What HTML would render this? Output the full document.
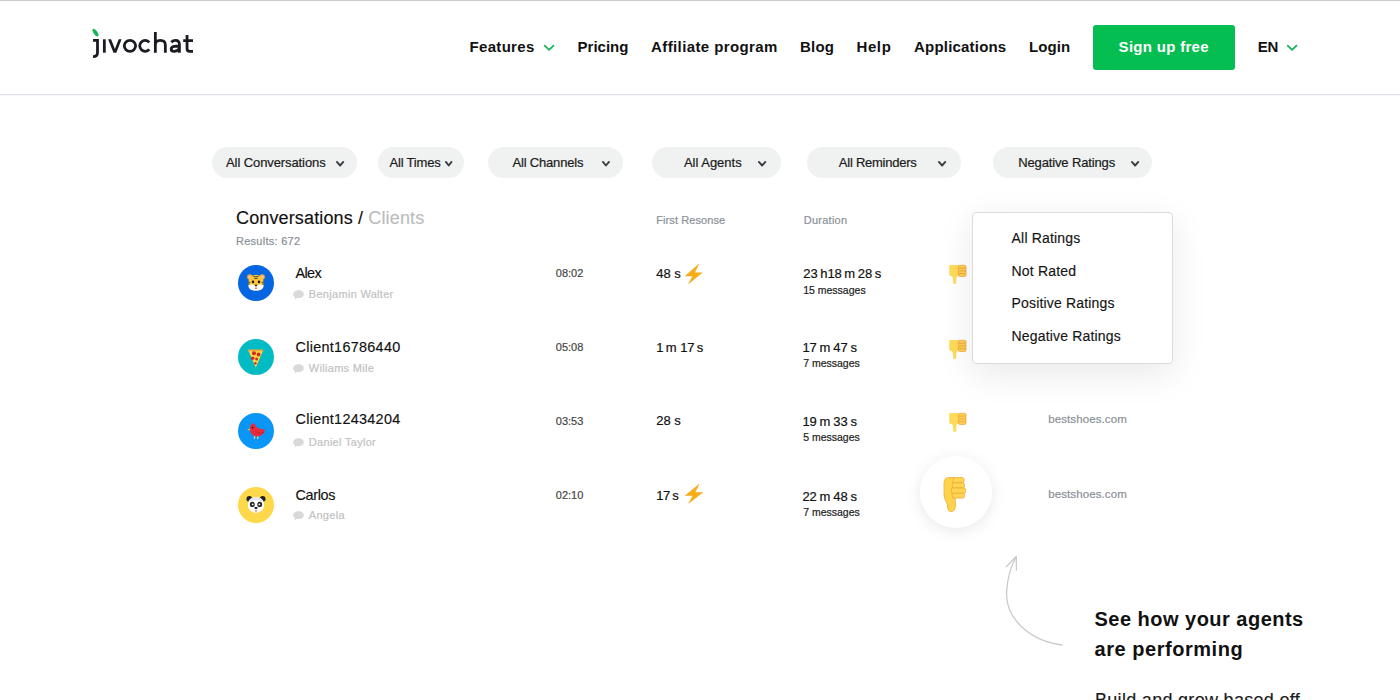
<!DOCTYPE html>
<html><head><meta charset="utf-8"><title>JivoChat</title>
<style>
html,body{margin:0;padding:0;background:#fff;}
body{width:1400px;height:700px;position:relative;overflow:hidden;font-family:"Liberation Sans",sans-serif;}
.t{position:absolute;white-space:pre;line-height:1;}
.a{position:absolute;overflow:visible;}
.pill{position:absolute;background:#f0f2f2;border-radius:16px;}
</style></head><body>
<div class="a" style="left:0;top:0;width:1400px;height:1px;background:#cbcbcb"></div>
<div class="a" style="left:0;top:94px;width:1400px;height:1px;background:#e0e0ea"></div>
<div class="a" style="left:0;top:95px;width:1400px;height:1px;background:#f6f6fb"></div>
<svg class="a" style="left:0;top:0" width="220" height="80"><g fill="none" stroke="#1b1b24" stroke-width="2.8"><path d="M93 40.3H97.5V52.5Q97.5 56.6 93 56.6"/><path d="M104.35 39.3V52.7"/><ellipse cx="129.95" cy="45.85" rx="5.65" ry="5.45"/><path d="M149.3 42.3A5.45 5.45 0 1 0 149.3 49.4"/><path d="M155.35 32.1V52.7M155.35 52.7V45Q155.35 40.4 160.35 40.4Q165.35 40.4 165.35 45V52.7"/><path d="M171.3 42.3Q173 40.4 175.6 40.4Q179.4 40.4 179.4 44.6V52.7"/><path d="M179.4 46.4Q176.5 46.1 174.3 46.4Q171.2 46.9 171.2 49.2Q171.2 51.4 174.2 51.4Q177.6 51.4 179.4 48.6"/><path d="M187.05 35V48.8Q187.05 51.3 189.6 51.3H193M183.2 40.55H193"/></g><path d="M108.1 39.3H111.1L114.9 48.9L118.7 39.3H121.6L116.3 52.7H113.5Z" fill="#1b1b24"/><ellipse cx="95.5" cy="32.7" rx="4.4" ry="1.9" transform="rotate(55 95.5 32.7)" fill="#1ab550"/></svg>
<div class="t" style="left:469.60px;top:39.20px;font-size:15px;color:#111;font-weight:bold;letter-spacing:0.3px;">Features</div>
<div class="t" style="left:577.60px;top:39.20px;font-size:15px;color:#111;font-weight:bold;letter-spacing:0px;">Pricing</div>
<div class="t" style="left:651.00px;top:39.20px;font-size:15px;color:#111;font-weight:bold;letter-spacing:0.4px;">Affiliate program</div>
<div class="t" style="left:800.00px;top:39.20px;font-size:15px;color:#111;font-weight:bold;letter-spacing:0.2px;">Blog</div>
<div class="t" style="left:856.50px;top:39.20px;font-size:15px;color:#111;font-weight:bold;letter-spacing:0.6px;">Help</div>
<div class="t" style="left:914.00px;top:39.20px;font-size:15px;color:#111;font-weight:bold;letter-spacing:0.2px;">Applications</div>
<div class="t" style="left:1029.00px;top:39.20px;font-size:15px;color:#111;font-weight:bold;letter-spacing:0.1px;">Login</div>
<svg class="a" style="left:543.10px;top:44.10px" width="12.20" height="7.60"><polyline points="1.7,1.7 6.1000000000000005,5.9 10.5,1.7" fill="none" stroke="#17b257" stroke-width="1.7" stroke-linecap="round" stroke-linejoin="round"/></svg>
<div class="a" style="left:1093px;top:25px;width:142px;height:45px;background:#05be52;border-radius:3px"></div>
<div class="t" style="left:1118.60px;top:39.20px;font-size:15px;color:#fff;font-weight:bold;letter-spacing:0.3px;">Sign up free</div>
<div class="t" style="left:1257.80px;top:39.20px;font-size:15px;color:#111;font-weight:bold;letter-spacing:-0.4px;">EN</div>
<svg class="a" style="left:1286.10px;top:44.10px" width="12.20" height="7.60"><polyline points="1.7,1.7 6.1000000000000005,5.9 10.5,1.7" fill="none" stroke="#17b257" stroke-width="1.7" stroke-linecap="round" stroke-linejoin="round"/></svg>
<div class="pill" style="left:212px;top:147px;width:145.0px;height:31px"></div>
<div class="t" style="left:226.00px;top:155.90px;font-size:13px;color:#1a1a1a;font-weight:normal;letter-spacing:-0.092px;-webkit-text-stroke:0.2px currentColor;">All Conversations</div>
<svg class="a" style="left:334.90px;top:159.50px" width="10.20" height="7.40"><polyline points="1.9,1.9 5.1,5.5 8.3,1.9" fill="none" stroke="#3a3d42" stroke-width="1.9" stroke-linecap="round" stroke-linejoin="round"/></svg>
<div class="pill" style="left:377.8px;top:147px;width:86.5px;height:31px"></div>
<div class="t" style="left:389.50px;top:155.90px;font-size:13px;color:#1a1a1a;font-weight:normal;letter-spacing:-0.182px;-webkit-text-stroke:0.2px currentColor;">All Times</div>
<svg class="a" style="left:443.70px;top:159.50px" width="9.40" height="7.40"><polyline points="1.9,1.9 4.699999999999999,5.5 7.5,1.9" fill="none" stroke="#3a3d42" stroke-width="1.9" stroke-linecap="round" stroke-linejoin="round"/></svg>
<div class="pill" style="left:488.3px;top:147px;width:135.2px;height:31px"></div>
<div class="t" style="left:512.60px;top:155.90px;font-size:13px;color:#1a1a1a;font-weight:normal;letter-spacing:-0.2px;-webkit-text-stroke:0.2px currentColor;">All Channels</div>
<svg class="a" style="left:600.70px;top:159.50px" width="9.90" height="7.40"><polyline points="1.9,1.9 4.949999999999999,5.5 8.0,1.9" fill="none" stroke="#3a3d42" stroke-width="1.9" stroke-linecap="round" stroke-linejoin="round"/></svg>
<div class="pill" style="left:652px;top:147px;width:128.5px;height:31px"></div>
<div class="t" style="left:683.90px;top:155.90px;font-size:13px;color:#1a1a1a;font-weight:normal;letter-spacing:-0.003px;-webkit-text-stroke:0.2px currentColor;">All Agents</div>
<svg class="a" style="left:756.60px;top:159.50px" width="10.20" height="7.40"><polyline points="1.9,1.9 5.1,5.5 8.3,1.9" fill="none" stroke="#3a3d42" stroke-width="1.9" stroke-linecap="round" stroke-linejoin="round"/></svg>
<div class="pill" style="left:807.2px;top:147px;width:153.7px;height:31px"></div>
<div class="t" style="left:838.80px;top:155.90px;font-size:13px;color:#1a1a1a;font-weight:normal;letter-spacing:-0.24px;-webkit-text-stroke:0.2px currentColor;">All Reminders</div>
<svg class="a" style="left:936.90px;top:159.50px" width="10.20" height="7.40"><polyline points="1.9,1.9 5.1,5.5 8.3,1.9" fill="none" stroke="#3a3d42" stroke-width="1.9" stroke-linecap="round" stroke-linejoin="round"/></svg>
<div class="pill" style="left:993px;top:147px;width:158.5px;height:31px"></div>
<div class="t" style="left:1018.20px;top:155.90px;font-size:13px;color:#1a1a1a;font-weight:normal;letter-spacing:-0.131px;-webkit-text-stroke:0.2px currentColor;">Negative Ratings</div>
<svg class="a" style="left:1129.90px;top:159.50px" width="10.20" height="7.40"><polyline points="1.9,1.9 5.1,5.5 8.3,1.9" fill="none" stroke="#3a3d42" stroke-width="1.9" stroke-linecap="round" stroke-linejoin="round"/></svg>
<div class="t" style="left:236.00px;top:208.76px;font-size:18px;color:#111;font-weight:normal;letter-spacing:0.14px;-webkit-text-stroke:0.15px currentColor;">Conversations / <span style="color:#bcbcbc">Clients</span></div>
<div class="t" style="left:236.00px;top:235.69px;font-size:11px;color:#8a9098;font-weight:normal;letter-spacing:0.27px;-webkit-text-stroke:0.2px currentColor;">Results: 672</div>
<div class="t" style="left:656.30px;top:214.59px;font-size:11px;color:#8a9098;font-weight:normal;letter-spacing:0.08px;-webkit-text-stroke:0.2px currentColor;">First Resonse</div>
<div class="t" style="left:803.70px;top:214.59px;font-size:11px;color:#8a9098;font-weight:normal;letter-spacing:0.26px;-webkit-text-stroke:0.2px currentColor;">Duration</div>
<div class="a" style="left:238px;top:265.2px;width:36px;height:36px;border-radius:50%;background:#0666e2"></div>
<svg class="a" style="left:246px;top:273.2px" width="20" height="20" viewBox="0 0 20 20"><circle cx="3.8" cy="4" r="2.7" fill="#f4a640"/><circle cx="16.2" cy="4" r="2.7" fill="#f4a640"/><circle cx="3.9" cy="4.1" r="1.5" fill="#fbd3a0"/><circle cx="16.1" cy="4.1" r="1.5" fill="#fbd3a0"/><path d="M2.6 8.5C2.6 4 5.6 2 10 2C14.4 2 17.4 4 17.4 8.5L17.4 12.8C17.4 16 14.4 17.6 10 17.6C5.6 17.6 2.6 16 2.6 12.8Z" fill="#ffc53a"/><path d="M2.6 12C4.5 11.2 7.5 11.6 10 13C12.5 11.6 15.5 11.2 17.4 12L17.4 13.2C17.4 16 14.4 17.6 10 17.6C5.6 17.6 2.6 16 2.6 13.2Z" fill="#fff"/><path d="M7.2 2.4Q10 4.4 12.8 2.4L12.6 3.2Q10 5.2 7.4 3.2Z M8 4.6Q10 6 12 4.6L11.8 5.3Q10 6.7 8.2 5.3Z" fill="#222"/><path d="M2.6 8.6L5 9.4L2.6 9.8Z M2.6 10.6L4.6 11.2L2.6 11.6Z M17.4 8.6L15 9.4L17.4 9.8Z M17.4 10.6L15.4 11.2L17.4 11.6Z" fill="#222"/><ellipse cx="7" cy="8.9" rx="1.2" ry="1.4" fill="#111"/><ellipse cx="13" cy="8.9" rx="1.2" ry="1.4" fill="#111"/><path d="M8.4 11.8L11.6 11.8L10 13.8Z" fill="#111"/><ellipse cx="10" cy="15.2" rx="1" ry="0.9" fill="#f0635a"/></svg>
<div class="t" style="left:295.50px;top:265.61px;font-size:14.4px;color:#111;font-weight:normal;letter-spacing:-0.6px;-webkit-text-stroke:0.15px currentColor;">Alex</div>
<svg class="a" style="left:293.3px;top:290.1px" width="11" height="10" viewBox="0 0 11 10"><path d="M5.5 0.3C8.6 0.3 10.8 2 10.8 4.2C10.8 6.4 8.6 8.1 5.5 8.1C4.8 8.1 4.2 8 3.6 7.9L1.6 9.6L1.9 7.2C0.9 6.5 0.2 5.4 0.2 4.2C0.2 2 2.4 0.3 5.5 0.3Z" fill="#d9d9d9"/></svg>
<div class="t" style="left:308.80px;top:289.29px;font-size:11px;color:#c2c2c2;font-weight:normal;letter-spacing:0.3px;-webkit-text-stroke:0.2px currentColor;">Benjamin Walter</div>
<div class="t" style="left:555.80px;top:268.29px;font-size:11px;color:#454545;font-weight:normal;letter-spacing:0px;-webkit-text-stroke:0.2px currentColor;">08:02</div>
<div class="t" style="left:656.20px;top:267.00px;font-size:13px;color:#111;font-weight:normal;letter-spacing:0px;-webkit-text-stroke:0.2px currentColor;">48 s</div>
<svg class="a" style="left:684.5px;top:264px" width="17" height="20" viewBox="0 0 16 19.5" preserveAspectRatio="none"><path d="M12.8 0.3L0.3 11.6L7.4 11.6L3.4 19.2L16 8.6L9 8.6Z" fill="#f7ae14" stroke="#f0a010" stroke-width="0.5" stroke-linejoin="round"/></svg>
<div class="t" style="left:803.20px;top:266.70px;font-size:13px;color:#111;font-weight:normal;letter-spacing:0px;-webkit-text-stroke:0.2px currentColor;word-spacing:-1.1px;">23 h18 m 28 s</div>
<div class="t" style="left:803.20px;top:285.01px;font-size:10.5px;color:#222;font-weight:normal;letter-spacing:0px;-webkit-text-stroke:0.2px currentColor;">15 messages</div>
<svg class="a" style="left:948.8px;top:264.8px" width="17.3" height="19" viewBox="0 0 17.3 19"><path d="M0.2 1.2Q0.2 0 1.4 0L9.7 0L9.7 10.6L8.4 10.9Q7.4 11.6 7.3 13.5L7.2 18Q7.1 19 5.7 19Q4.4 19 4.3 18L4 13.5Q3.8 11.6 2.2 10.9L1.2 10.7Q0.2 10.4 0.2 9.3Z" fill="#fedb5a"/><rect x="9.4" y="0.3" width="7.6" height="11.2" rx="1.4" fill="#fdd152" stroke="#eda53e" stroke-width="0.7"/><path d="M9.6 3.1H16.8M9.6 5.9H17.2M9.6 8.7H16.8" stroke="#eb9f3b" stroke-width="0.8"/></svg>
<div class="a" style="left:238px;top:339.3px;width:36px;height:36px;border-radius:50%;background:#03bbc4"></div>
<svg class="a" style="left:247px;top:348.3px" width="18" height="20" viewBox="0 0 18 20"><path d="M1.2 2.2L16.2 2.2L8.8 19.6Z" fill="#ffd93b"/><path d="M1 1.4L16.4 1.4L15.8 3.2L1.6 3.2Z" fill="#f4a93a"/><circle cx="7" cy="5.2" r="2" fill="#d8262c"/><circle cx="11.6" cy="6.5" r="1.9" fill="#d8262c"/><circle cx="5.6" cy="10.2" r="1.8" fill="#d8262c"/><circle cx="9.6" cy="11" r="1.5" fill="#d8262c"/><circle cx="8.4" cy="15.2" r="1.2" fill="#d8262c"/></svg>
<div class="t" style="left:295.50px;top:339.51px;font-size:14.4px;color:#111;font-weight:normal;letter-spacing:0.3px;-webkit-text-stroke:0.15px currentColor;">Client16786440</div>
<svg class="a" style="left:293.3px;top:364.2px" width="11" height="10" viewBox="0 0 11 10"><path d="M5.5 0.3C8.6 0.3 10.8 2 10.8 4.2C10.8 6.4 8.6 8.1 5.5 8.1C4.8 8.1 4.2 8 3.6 7.9L1.6 9.6L1.9 7.2C0.9 6.5 0.2 5.4 0.2 4.2C0.2 2 2.4 0.3 5.5 0.3Z" fill="#d9d9d9"/></svg>
<div class="t" style="left:308.80px;top:363.39px;font-size:11px;color:#c2c2c2;font-weight:normal;letter-spacing:0.3px;-webkit-text-stroke:0.2px currentColor;">Wiliams Mile</div>
<div class="t" style="left:555.80px;top:341.89px;font-size:11px;color:#454545;font-weight:normal;letter-spacing:0px;-webkit-text-stroke:0.2px currentColor;">05:08</div>
<div class="t" style="left:656.20px;top:340.80px;font-size:13px;color:#111;font-weight:normal;letter-spacing:0px;-webkit-text-stroke:0.2px currentColor;word-spacing:-1.2px;">1 m</div>
<div class="t" style="left:680.20px;top:340.80px;font-size:13px;color:#111;font-weight:normal;letter-spacing:-0.2px;-webkit-text-stroke:0.2px currentColor;word-spacing:-0.8px;">17 s</div>
<div class="t" style="left:802.40px;top:340.80px;font-size:13px;color:#111;font-weight:normal;letter-spacing:0px;-webkit-text-stroke:0.2px currentColor;word-spacing:-0.85px;">17 m 47 s</div>
<div class="t" style="left:803.20px;top:357.61px;font-size:10.5px;color:#222;font-weight:normal;letter-spacing:0px;-webkit-text-stroke:0.2px currentColor;">7 messages</div>
<svg class="a" style="left:948.7px;top:340px" width="17.3" height="19" viewBox="0 0 17.3 19"><path d="M0.2 1.2Q0.2 0 1.4 0L9.7 0L9.7 10.6L8.4 10.9Q7.4 11.6 7.3 13.5L7.2 18Q7.1 19 5.7 19Q4.4 19 4.3 18L4 13.5Q3.8 11.6 2.2 10.9L1.2 10.7Q0.2 10.4 0.2 9.3Z" fill="#fedb5a"/><rect x="9.4" y="0.3" width="7.6" height="11.2" rx="1.4" fill="#fdd152" stroke="#eda53e" stroke-width="0.7"/><path d="M9.6 3.1H16.8M9.6 5.9H17.2M9.6 8.7H16.8" stroke="#eb9f3b" stroke-width="0.8"/></svg>
<div class="a" style="left:238px;top:412.6px;width:36px;height:36px;border-radius:50%;background:#0996f6"></div>
<svg class="a" style="left:246px;top:421.6px" width="20" height="18" viewBox="0 0 20 18"><path d="M1 7.5L4.2 6.6L4.4 8.6Z" fill="#f5c33b"/><path d="M4 7.2C4 4 5.5 1 7.8 1.4C9.4 1.7 9 3.5 10.4 5C12.5 7 16.5 7.2 18.8 7.6C18.4 11.5 15.5 14.5 11 14.6C7.5 14.7 4.2 11.5 4 7.2Z" fill="#ee2a3a"/><path d="M9.5 9C12 11.5 15 11.8 18 10" stroke="#b81d2b" stroke-width="0.9" fill="none"/><circle cx="6.6" cy="5.6" r="0.9" fill="#3a0a10"/><path d="M8.8 14.2L8.2 17M12 14.4L11.6 17" stroke="#f6c98a" stroke-width="1.2"/></svg>
<div class="t" style="left:295.50px;top:412.01px;font-size:14.4px;color:#111;font-weight:normal;letter-spacing:0.3px;-webkit-text-stroke:0.15px currentColor;">Client12434204</div>
<svg class="a" style="left:293.3px;top:438.1px" width="11" height="10" viewBox="0 0 11 10"><path d="M5.5 0.3C8.6 0.3 10.8 2 10.8 4.2C10.8 6.4 8.6 8.1 5.5 8.1C4.8 8.1 4.2 8 3.6 7.9L1.6 9.6L1.9 7.2C0.9 6.5 0.2 5.4 0.2 4.2C0.2 2 2.4 0.3 5.5 0.3Z" fill="#d9d9d9"/></svg>
<div class="t" style="left:308.80px;top:437.29px;font-size:11px;color:#c2c2c2;font-weight:normal;letter-spacing:0.3px;-webkit-text-stroke:0.2px currentColor;">Daniel Taylor</div>
<div class="t" style="left:555.80px;top:415.69px;font-size:11px;color:#454545;font-weight:normal;letter-spacing:0px;-webkit-text-stroke:0.2px currentColor;">03:53</div>
<div class="t" style="left:656.20px;top:414.00px;font-size:13px;color:#111;font-weight:normal;letter-spacing:0px;-webkit-text-stroke:0.2px currentColor;">28 s</div>
<div class="t" style="left:802.40px;top:415.00px;font-size:13px;color:#111;font-weight:normal;letter-spacing:0px;-webkit-text-stroke:0.2px currentColor;word-spacing:-0.85px;">19 m 33 s</div>
<div class="t" style="left:803.20px;top:432.41px;font-size:10.5px;color:#222;font-weight:normal;letter-spacing:0px;-webkit-text-stroke:0.2px currentColor;">5 messages</div>
<svg class="a" style="left:948.7px;top:413px" width="17.3" height="19" viewBox="0 0 17.3 19"><path d="M0.2 1.2Q0.2 0 1.4 0L9.7 0L9.7 10.6L8.4 10.9Q7.4 11.6 7.3 13.5L7.2 18Q7.1 19 5.7 19Q4.4 19 4.3 18L4 13.5Q3.8 11.6 2.2 10.9L1.2 10.7Q0.2 10.4 0.2 9.3Z" fill="#fedb5a"/><rect x="9.4" y="0.3" width="7.6" height="11.2" rx="1.4" fill="#fdd152" stroke="#eda53e" stroke-width="0.7"/><path d="M9.6 3.1H16.8M9.6 5.9H17.2M9.6 8.7H16.8" stroke="#eb9f3b" stroke-width="0.8"/></svg>
<div class="t" style="left:1048.20px;top:414.47px;font-size:11.5px;color:#8b9098;font-weight:normal;letter-spacing:0.1px;-webkit-text-stroke:0.2px currentColor;">bestshoes.com</div>
<div class="a" style="left:238px;top:486.6px;width:36px;height:36px;border-radius:50%;background:#fdd84a"></div>
<svg class="a" style="left:246px;top:494.6px" width="20" height="20" viewBox="0 0 20 20"><circle cx="3.3" cy="3.8" r="2.9" fill="#222"/><circle cx="16.7" cy="3.8" r="2.9" fill="#222"/><path d="M2 9.5C2 4.8 5.3 2.2 10 2.2C14.7 2.2 18 4.8 18 9.5C18 14.4 14.6 17.6 10 17.6C5.4 17.6 2 14.4 2 9.5Z" fill="#fff"/><path d="M2 9.5C2 4.8 5.3 2.2 10 2.2C14.7 2.2 18 4.8 18 9.5" fill="#e4e8ee"/><path d="M2 9.5C2 6 6 5.5 10 5.5C14 5.5 18 6 18 9.5C18 14.4 14.6 17.6 10 17.6C5.4 17.6 2 14.4 2 9.5Z" fill="#fff"/><ellipse cx="6.3" cy="9.4" rx="2.4" ry="2.7" fill="#222"/><ellipse cx="13.7" cy="9.4" rx="2.4" ry="2.7" fill="#222"/><circle cx="6.6" cy="9.4" r="0.9" fill="#fff"/><circle cx="13.4" cy="9.4" r="0.9" fill="#fff"/><path d="M8.3 12.6C8.3 11.9 11.7 11.9 11.7 12.6C11.7 13.6 10.6 14.3 10 14.3C9.4 14.3 8.3 13.6 8.3 12.6Z" fill="#222"/><ellipse cx="10" cy="16" rx="1.1" ry="0.8" fill="#f0607a"/></svg>
<div class="t" style="left:295.50px;top:487.71px;font-size:14.4px;color:#111;font-weight:normal;letter-spacing:-0.32px;-webkit-text-stroke:0.15px currentColor;">Carlos</div>
<svg class="a" style="left:293.3px;top:511.29999999999995px" width="11" height="10" viewBox="0 0 11 10"><path d="M5.5 0.3C8.6 0.3 10.8 2 10.8 4.2C10.8 6.4 8.6 8.1 5.5 8.1C4.8 8.1 4.2 8 3.6 7.9L1.6 9.6L1.9 7.2C0.9 6.5 0.2 5.4 0.2 4.2C0.2 2 2.4 0.3 5.5 0.3Z" fill="#d9d9d9"/></svg>
<div class="t" style="left:308.80px;top:510.49px;font-size:11px;color:#c2c2c2;font-weight:normal;letter-spacing:0.3px;-webkit-text-stroke:0.2px currentColor;">Angela</div>
<div class="t" style="left:555.80px;top:490.19px;font-size:11px;color:#454545;font-weight:normal;letter-spacing:0px;-webkit-text-stroke:0.2px currentColor;">02:10</div>
<div class="t" style="left:656.20px;top:488.50px;font-size:13px;color:#111;font-weight:normal;letter-spacing:-0.3px;-webkit-text-stroke:0.2px currentColor;word-spacing:-1.2px;">17 s</div>
<svg class="a" style="left:685.3px;top:484.2px" width="17.5" height="19.5" viewBox="0 0 16 19.5" preserveAspectRatio="none"><path d="M12.8 0.3L0.3 11.6L7.4 11.6L3.4 19.2L16 8.6L9 8.6Z" fill="#f7ae14" stroke="#f0a010" stroke-width="0.5" stroke-linejoin="round"/></svg>
<div class="t" style="left:802.40px;top:490.00px;font-size:13px;color:#111;font-weight:normal;letter-spacing:0px;-webkit-text-stroke:0.2px currentColor;word-spacing:-0.85px;">22 m 48 s</div>
<div class="t" style="left:803.20px;top:507.41px;font-size:10.5px;color:#222;font-weight:normal;letter-spacing:0px;-webkit-text-stroke:0.2px currentColor;">7 messages</div>
<div class="t" style="left:1048.20px;top:488.57px;font-size:11.5px;color:#8b9098;font-weight:normal;letter-spacing:0.1px;-webkit-text-stroke:0.2px currentColor;">bestshoes.com</div>
<div class="a" style="left:920.4px;top:455.6px;width:72px;height:72px;border-radius:50%;background:#fff;box-shadow:0 3px 16px rgba(0,0,0,0.09)"></div>
<svg class="a" style="left:941.8px;top:477.1px" width="24.2" height="35" viewBox="0 0 24 35" preserveAspectRatio="none"><path d="M2 5.8Q2.3 0.6 7 0.6L13 0.6L13 21Q13.2 25 13.3 28Q13.5 34.6 8.6 34.6Q5.9 34.6 5.6 30Q5.3 26.5 3.6 23.5Q2 21 2 17Z" fill="#ffd44c" stroke="#eea73a" stroke-width="0.8"/><path d="M11.5 0.6H20.6Q21.9 0.6 21.9 3.2Q21.9 5.8 20.6 5.8H11.5Q10.6 3.2 11.5 0.6Z" fill="#ffd650" stroke="#eea73a" stroke-width="0.8"/><path d="M10.5 5.8H20.9Q22.3 5.8 22.3 8.4Q22.3 11 20.9 11H10.5Q9.6 8.4 10.5 5.8Z" fill="#ffd650" stroke="#eea73a" stroke-width="0.8"/><path d="M9.6 11H22Q23.5 11 23.5 13.65Q23.5 16.3 22 16.3H9.6Q8.7 13.65 9.6 11Z" fill="#ffd650" stroke="#eea73a" stroke-width="0.8"/><path d="M10.5 16.3H20.9Q22.3 16.3 22.3 18.65Q22.3 21 20.9 21H10.5Q9.6 18.65 10.5 16.3Z" fill="#ffd650" stroke="#eea73a" stroke-width="0.8"/></svg>
<div class="a" style="left:972px;top:212px;width:199px;height:150px;border:1px solid #dcdcdc;border-radius:4px;background:#fff;box-shadow:0 10px 36px rgba(0,0,0,0.09)"></div>
<div class="t" style="left:1011.60px;top:231.35px;font-size:14px;color:#151515;font-weight:normal;letter-spacing:0.17px;-webkit-text-stroke:0.15px currentColor;">All Ratings</div>
<div class="t" style="left:1011.60px;top:263.85px;font-size:14px;color:#151515;font-weight:normal;letter-spacing:0.17px;-webkit-text-stroke:0.15px currentColor;">Not Rated</div>
<div class="t" style="left:1011.60px;top:296.35px;font-size:14px;color:#151515;font-weight:normal;letter-spacing:0.17px;-webkit-text-stroke:0.15px currentColor;">Positive Ratings</div>
<div class="t" style="left:1011.60px;top:328.85px;font-size:14px;color:#151515;font-weight:normal;letter-spacing:0.17px;-webkit-text-stroke:0.15px currentColor;">Negative Ratings</div>
<svg class="a" style="left:0;top:0" width="1400" height="700"><path d="M1062 645 C1030 641 1004 618 1006.8 590 C1007.5 580 1011 566 1016 557" fill="none" stroke="#cacaca" stroke-width="1.3" stroke-linecap="round"/><path d="M1006.3 566.7 L1016.2 556.5 L1016.4 570" fill="none" stroke="#cacaca" stroke-width="1.3" stroke-linecap="round" stroke-linejoin="round"/></svg>
<div class="t" style="left:1094.50px;top:609.47px;font-size:20px;color:#111;font-weight:bold;letter-spacing:0.48px;">See how your agents</div>
<div class="t" style="left:1094.50px;top:638.67px;font-size:20px;color:#111;font-weight:bold;letter-spacing:0.54px;">are performing</div>
<div class="t" style="left:1095.00px;top:690.76px;font-size:18px;color:#1a1a1a;font-weight:normal;letter-spacing:0.3px;-webkit-text-stroke:0.15px currentColor;">Build and grow based off</div>
</body></html>
